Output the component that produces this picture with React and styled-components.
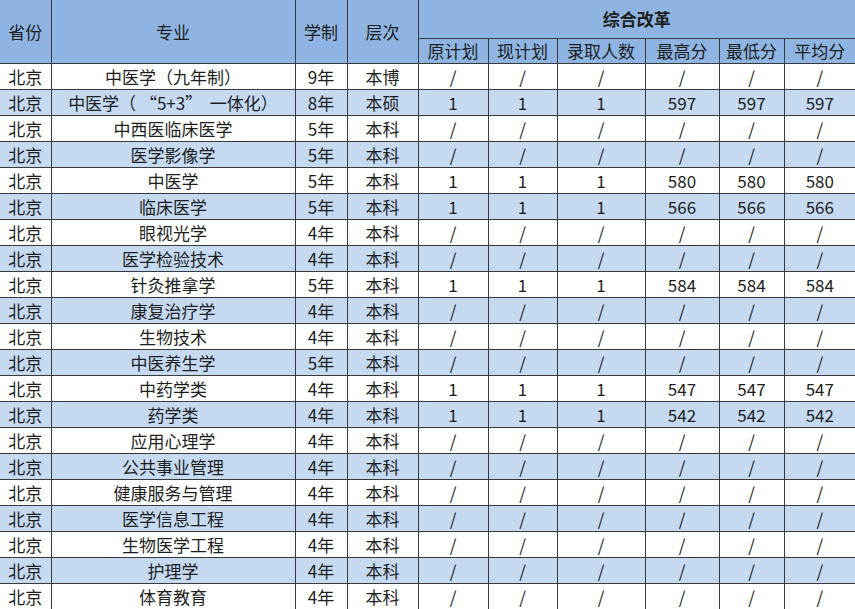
import React from 'react';
import styled, { createGlobalStyle } from 'styled-components';

const GlobalStyle = createGlobalStyle`
  html, body {
    margin: 0;
    padding: 0;
    background: #ffffff;
  }
  body {
    font-family: "Noto Sans CJK SC", "Noto Sans", sans-serif;
    color: #1e1e1e;
  }
`;

const Table = styled.table`
  width: 855px;
  border-collapse: collapse;
  table-layout: fixed;
  font-size: 17px;
  line-height: 1;
`;

const HeadCell = styled.th`
  background: #8db4e2;
  font-weight: ${(props) => (props.bold ? 700 : 400)};
  border: 1px solid #3a3a3a;
  padding: 0;
  text-align: center;
  vertical-align: middle;
  white-space: nowrap;
  &:first-child {
    border-left: none;
  }
  &:last-child {
    border-right: none;
  }
`;

const TopRow = styled.tr`
  height: 38px;
  th {
    border-top: none;
  }
`;

const SubRow = styled.tr`
  height: 25px;
`;

const BodyRow = styled.tr`
  height: 26px;
  background: ${(props) => (props.shaded ? '#c5d9f1' : '#ffffff')};
`;

const Cell = styled.td`
  border: 1px solid #3a3a3a;
  padding: 0;
  text-align: center;
  vertical-align: middle;
  white-space: pre;
  &:first-child {
    border-left: none;
  }
  &:last-child {
    border-right: none;
  }
`;

const widths = [51, 244, 52, 71, 70, 69, 88, 74, 65, 71];

const S = ['/', '/', '/', '/', '/', '/'];
const score = (n) => ['1', '1', '1', n, n, n];

const rows = [
  ['中医学（九年制）', '9年', '本博', S],
  ['中医学（ “5+3”  一体化）', '8年', '本硕', score('597')],
  ['中西医临床医学', '5年', '本科', S],
  ['医学影像学', '5年', '本科', S],
  ['中医学', '5年', '本科', score('580')],
  ['临床医学', '5年', '本科', score('566')],
  ['眼视光学', '4年', '本科', S],
  ['医学检验技术', '4年', '本科', S],
  ['针灸推拿学', '5年', '本科', score('584')],
  ['康复治疗学', '4年', '本科', S],
  ['生物技术', '4年', '本科', S],
  ['中医养生学', '5年', '本科', S],
  ['中药学类', '4年', '本科', score('547')],
  ['药学类', '4年', '本科', score('542')],
  ['应用心理学', '4年', '本科', S],
  ['公共事业管理', '4年', '本科', S],
  ['健康服务与管理', '4年', '本科', S],
  ['医学信息工程', '4年', '本科', S],
  ['生物医学工程', '4年', '本科', S],
  ['护理学', '4年', '本科', S],
  ['体育教育', '4年', '本科', S],
];

const subHeads = ['原计划', '现计划', '录取人数', '最高分', '最低分', '平均分'];

const App = () => (
  <>
    <GlobalStyle />
    <Table>
      <colgroup>
        {widths.map((w, i) => (
          <col key={i} style={{ width: w }} />
        ))}
      </colgroup>
      <thead>
        <TopRow>
          <HeadCell rowSpan={2}>省份</HeadCell>
          <HeadCell rowSpan={2}>专业</HeadCell>
          <HeadCell rowSpan={2}>学制</HeadCell>
          <HeadCell rowSpan={2}>层次</HeadCell>
          <HeadCell colSpan={6} bold>综合改革</HeadCell>
        </TopRow>
        <SubRow>
          {subHeads.map((h) => (
            <HeadCell key={h}>{h}</HeadCell>
          ))}
        </SubRow>
      </thead>
      <tbody>
        {rows.map(([major, years, level, vals], i) => (
          <BodyRow key={major} shaded={i % 2 === 1}>
            <Cell>北京</Cell>
            <Cell>{major}</Cell>
            <Cell>{years}</Cell>
            <Cell>{level}</Cell>
            {vals.map((v, j) => (
              <Cell key={j}>{v}</Cell>
            ))}
          </BodyRow>
        ))}
      </tbody>
    </Table>
  </>
);

export default App;
